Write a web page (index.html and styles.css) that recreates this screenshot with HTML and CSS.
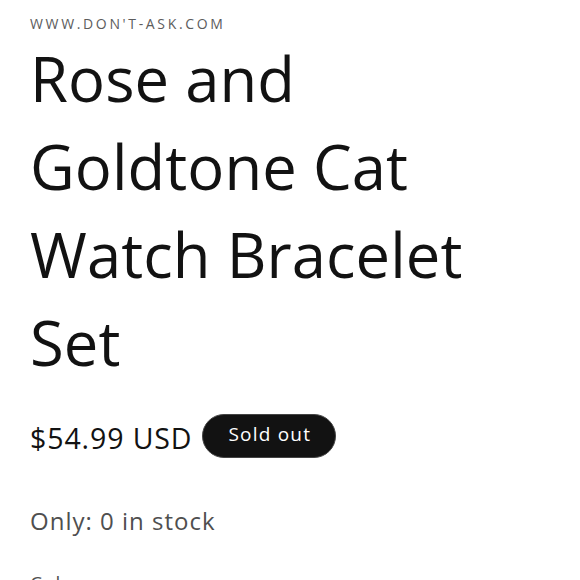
FILE: index.html
```html
<!DOCTYPE html>
<html lang="en">
<head>
<meta charset="utf-8">
<title>Rose and Goldtone Cat Watch Bracelet Set</title>
<link rel="stylesheet" href="styles.css">
</head>
<body>
<main class="product">
  <p class="vendor">WWW.DON'T-ASK.COM</p>
  <h1 class="title">Rose and Goldtone Cat Watch Bracelet Set</h1>
  <div class="price-row">
    <span class="price">$54.99 USD</span>
    <span class="badge">Sold out</span>
  </div>
  <p class="stock">Only: 0 in stock</p>
  <p class="label">Color</p>
</main>
</body>
</html>
```
FILE: styles.css
```css
html, body {
  margin: 0;
  padding: 0;
  background: #ffffff;
}
body {
  font-family: "Open Sans", "Noto Sans", sans-serif;
  color: #121212;
}
.product {
  padding: 14px 30px 0 30px;
  width: 500px;
}
.vendor {
  margin: 0;
  font-size: 14px;
  line-height: 20px;
  letter-spacing: 2.65px;
  color: #5c5c5c;
}
.title {
  margin: 0;
  font-weight: 400;
  font-size: 61.5px;
  line-height: 88px;
  letter-spacing: 0.1px;
  color: #121212;
}
.price-row {
  margin-top: 28px;
  display: flex;
  align-items: flex-start;
  gap: 10px;
}
.price {
  font-size: 28.5px;
  line-height: 48px;
  letter-spacing: 0.9px;
  color: #121212;
}
.badge {
  display: inline-block;
  height: 40px;
  line-height: 38px;
  padding: 0 24px 2px 25px;
  box-sizing: content-box;
  border: 1px solid #444;
  border-radius: 22px;
  background: #121212;
  color: #ffffff;
  font-size: 19px;
  letter-spacing: 1.2px;
}
.stock {
  margin: 44px 0 0 0;
  font-size: 24px;
  line-height: 30px;
  letter-spacing: 1px;
  color: #4f4f4f;
}
.label {
  margin: 34px 0 0 0;
  font-size: 19px;
  line-height: 26px;
  letter-spacing: 1px;
  color: #4f4f4f;
}
```
